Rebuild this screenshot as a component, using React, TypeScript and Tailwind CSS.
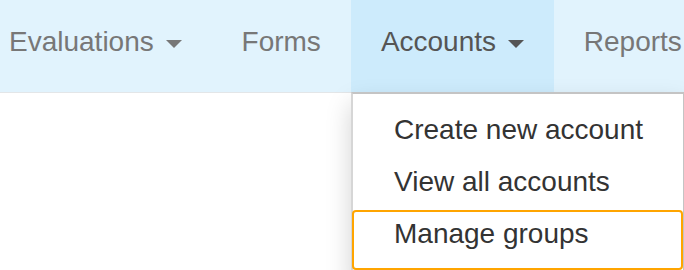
import type { ReactNode } from 'react'

function Caret() {
  return (
    <span className="ml-[4px] inline-block h-0 w-0 border-x-8 border-t-8 border-x-transparent border-t-current align-middle" />
  )
}

function NavItem({ children, active = false, dropdown = false }: { children: ReactNode; active?: boolean; dropdown?: boolean }) {
  return (
    <li
      className={`shrink-0 whitespace-nowrap px-[30px] pt-[22px] pb-[30px] leading-[40px] ${
        active ? 'bg-[#cdebfc] text-[#555]' : 'text-[#777]'
      }`}
    >
      {children}
      {dropdown && (
        <>
          {' '}
          <Caret />
        </>
      )}
    </li>
  )
}

export default function App() {
  return (
    <div
      className="relative h-[270px] w-[684px] overflow-hidden bg-white text-[28px]"
      style={{ fontFamily: '"Liberation Sans", Arial, sans-serif' }}
    >
      <nav className="border-b border-[#e3e6e8] bg-[#e1f3fd]">
        <ul className="ml-[-21px] flex">
          <NavItem dropdown>Evaluations</NavItem>
          <NavItem>Forms</NavItem>
          <NavItem active dropdown>Accounts</NavItem>
          <NavItem>Reports</NavItem>
        </ul>
      </nav>

      {/* open Accounts menu */}
      <div className="absolute left-[351px] top-[92px] w-[334px] whitespace-nowrap border-2 border-[#c4c4c4] border-l-[#d6d6d6] bg-white pt-[10px] pb-[8px] leading-[40px] text-[#333] shadow-[0_12px_24px_rgba(0,0,0,0.175)]">
        <div className="px-[41px] py-[6px]">Create new account</div>
        <div className="px-[41px] py-[6px]">View all accounts</div>
        <div className="-ml-[1px] mt-[2px] h-[60px] rounded-[4px] border-2 border-[#ffa500] pl-[40px] pt-[2px]">
          Manage groups
        </div>
      </div>
    </div>
  )
}
